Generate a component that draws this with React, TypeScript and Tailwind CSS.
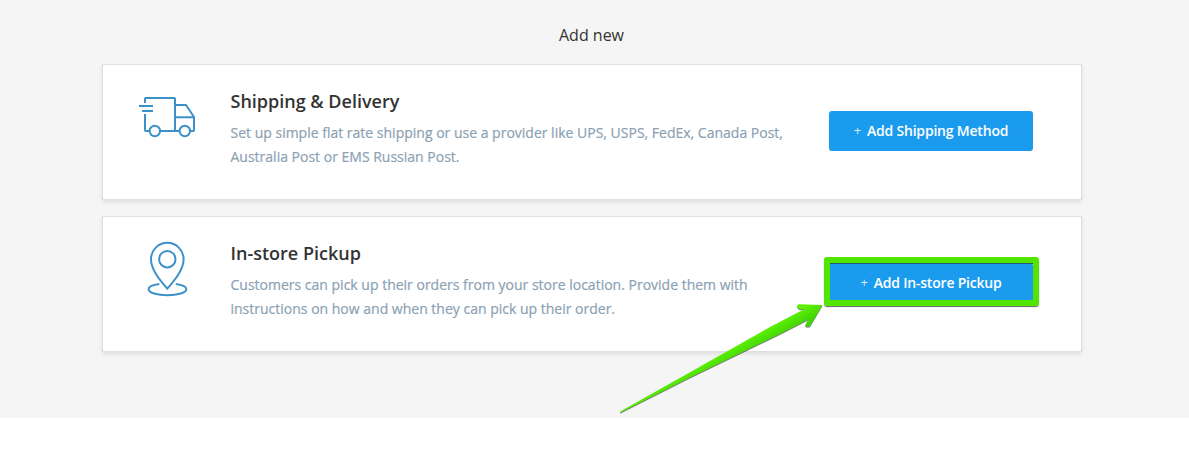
import React from "react";

interface MethodCardProps {
  icon: React.ReactNode;
  title: string;
  description: string;
  action: string;
  highlighted?: boolean;
}

function TruckIcon() {
  return (
    <svg width="58" height="42" viewBox="0 0 58 42" fill="none" stroke="#3d91c9" strokeWidth="2" strokeLinejoin="round">
      <path d="M6 7V2.8Q6 2 6.8 2H35.2Q36 2 36 2.8V35" />
      <path d="M6 18V34.2Q6 35 6.8 35H10.5" />
      <path d="M0 10H14M3 15H14" />
      <path d="M36 9H47L55 21V34.2Q55 35 54.2 35H51M36 21.3H55M20.5 35H41" />
      <circle cx="15.8" cy="35" r="5.2" />
      <circle cx="45.8" cy="35" r="5.2" />
    </svg>
  );
}

function PinIcon() {
  return (
    <svg width="42" height="56" viewBox="0 0 42 56" fill="none" stroke="#3d91c9" strokeWidth="2">
      <path d="M21.3 47.7C14 39.2 5 28.7 5 18.2A16.3 16.4 0 0 1 37.6 18.2C37.6 28.7 28.6 39.2 21.3 47.7Z" />
      <circle cx="21.3" cy="18.2" r="8.2" />
      <path d="M13.3 42.9C6.5 43.7 2.6 45.5 2.6 48.2C2.6 51.7 11 54.2 21.3 54.2S40.3 51.7 40.3 48.2C40.3 45.5 36.5 43.7 29.7 42.9" />
    </svg>
  );
}

function HighlightFrame() {
  return (
    <div className="pointer-events-none absolute -left-[5px] -top-[6px] h-[49px] w-[215px] rounded-[3px] border-[6px] border-[#52e502] shadow-[0_1px_1px_rgba(0,0,0,0.6),inset_0_1px_0_#245b70]" />
  );
}

function Arrow() {
  return (
    <svg className="pointer-events-none absolute left-[618px] top-[300px]" width="210" height="118" viewBox="0 0 210 118">
      <defs>
        <linearGradient id="arrow" gradientUnits="userSpaceOnUse" x1="148" y1="29" x2="154" y2="40">
          <stop offset="0" stopColor="#5bf004" />
          <stop offset="1" stopColor="#43d405" />
        </linearGradient>
      </defs>
      <path
        className="drop-shadow-[0_1px_0.5px_rgba(0,0,0,0.5)]"
        d="M2.2 112.8L2.2 111.5L72 72.2L152 27L186 9.3L181 8.9Q177.5 6.5 180.5 4.2L204.5 5L192.5 25.5Q190 28.2 187 25.5L190.3 19.6L162 34L72 77.6Z"
        fill="url(#arrow)"
      />
    </svg>
  );
}

function MethodCard({ icon, title, description, action, highlighted }: MethodCardProps) {
  return (
    <section className="flex h-[136px] w-[980px] border border-[#dfdfdf] bg-white shadow-[0_2px_4px_rgba(0,0,0,0.09)]">
      <div className="flex w-[127.5px] shrink-0 justify-center pt-[24px]">{icon}</div>
      <div className="w-[598.5px] shrink-0 pt-6">
        <h2 className="text-[18px] leading-6 font-semibold text-[#333]">{title}</h2>
        <p className="mt-2 w-[570px] text-[14px] leading-6 text-[#8ba1b3] [-webkit-text-stroke:0.2px_#8ba1b3]">
          {description}
        </p>
      </div>
      <div className="relative mt-[46px] h-10">
        <button className="flex h-10 w-[204px] items-center justify-center rounded-[3px] bg-[#1b9bee] pb-[2px] text-[14px] font-semibold tracking-[-0.2px] text-white">
          <span className="mr-1.5 pt-px text-[13px] font-normal text-[#d5edfd]">+</span>
          {action}
        </button>
        {highlighted && <HighlightFrame />}
      </div>
    </section>
  );
}

export default function App() {
  return (
    <div className="h-[463px] bg-white font-['Open_Sans',sans-serif]">
      <main className="relative h-[418px] bg-[#f5f5f5] pl-[102px]">
        <h1 className="flex h-16 w-[979px] items-center justify-center pt-[6px] text-[16px] text-[#333]">Add new</h1>
        <div className="flex flex-col gap-4">
          <MethodCard
            icon={<div className="mt-[7px] ml-[2.5px]"><TruckIcon /></div>}
            title="Shipping & Delivery"
            description="Set up simple flat rate shipping or use a provider like UPS, USPS, FedEx, Canada Post, Australia Post or EMS Russian Post."
            action="Add Shipping Method"
          />
          <MethodCard
            icon={<div className="ml-[0.5px]"><PinIcon /></div>}
            title="In-store Pickup"
            description="Customers can pick up their orders from your store location. Provide them with instructions on how and when they can pick up their order."
            action="Add In-store Pickup"
            highlighted
          />
        </div>
        <Arrow />
      </main>
    </div>
  );
}
